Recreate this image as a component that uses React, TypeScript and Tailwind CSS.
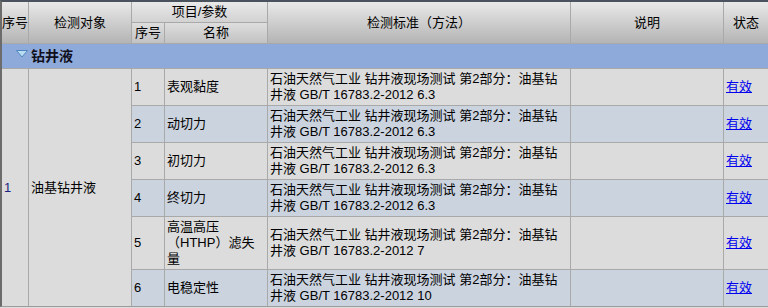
const rows = [
  { no: "1", name: "表观黏度", clause: "6.3" },
  { no: "2", name: "动切力", clause: "6.3" },
  { no: "3", name: "初切力", clause: "6.3" },
  { no: "4", name: "终切力", clause: "6.3" },
  { no: "5", name: "高温高压（HTHP）滤失量", clause: "7" },
  { no: "6", name: "电稳定性", clause: "10" },
];

const headTall = "bg-gradient-to-b from-[#e9e9e9] to-[#b4b4b4]";

function Caret() {
  return (
    <svg width="12" height="8" viewBox="0 0 12 8" className="mr-[3px] mt-[-4px]">
      <polygon points="0.5,0.5 11.5,0.5 6,7" fill="#b9dcf3" stroke="#4f86bd" strokeWidth="1" />
    </svg>
  );
}

export default function App() {
  return (
    <div className="w-[768px] h-[308px] overflow-hidden bg-[#dedede] font-['Liberation_Sans','Noto_Sans_CJK_SC',sans-serif] text-[13px] leading-[16px] text-black">
      <div className="grid grid-cols-[26px_102px_32px_102px_302px_152px_1fr] grid-rows-[20px_20px_24px] gap-px bg-[#a9a9a9] border-t-2 border-l-2 border-b border-t-[#4a525e] border-l-[#6c6c6c] border-b-[#9c9c9c]">
        {/* header */}
        <div className={`row-span-2 flex items-center justify-center ${headTall}`}>序号</div>
        <div className={`row-span-2 flex items-center justify-center ${headTall}`}>检测对象</div>
        <div className="col-span-2 flex items-center justify-center bg-gradient-to-b from-[#e9e9e9] to-[#d2d2d2]">项目/参数</div>
        <div className={`row-span-2 flex items-center justify-center ${headTall}`}>检测标准（方法）</div>
        <div className={`row-span-2 flex items-center justify-center ${headTall}`}>说明</div>
        <div className={`row-span-2 flex items-center justify-center ${headTall}`}>状态</div>
        <div className="flex items-center justify-center bg-gradient-to-b from-[#dedede] to-[#c2c2c2]">序号</div>
        <div className="flex items-center justify-center bg-gradient-to-b from-[#dedede] to-[#c2c2c2]">名称</div>

        {/* group */}
        <div className="col-span-7 flex items-center bg-[#8eaadb] pl-[14px]">
          <Caret />
          <span className="font-bold text-[14px] text-[#10101c]">钻井液</span>
        </div>

        {/* body */}
        <div className="row-span-6 flex items-center bg-[#dcdcdc] px-[2px] text-[#1a2380]">1</div>
        <div className="row-span-6 flex items-center bg-[#dcdcdc] px-[2px]">油基钻井液</div>
        {rows.map((r, i) => {
          const bg = i % 2 === 0 ? "bg-[#dcdcdc]" : "bg-[#cbd3df]";
          return [
            <div key={`n${i}`} className={`flex items-center px-[2px] py-[2px] ${bg}`}>{r.no}</div>,
            <div key={`m${i}`} className={`flex items-center px-[2px] py-[2px] ${bg}`}>{r.name}</div>,
            <div key={`s${i}`} className={`flex items-center px-[2px] py-[2px] ${bg}`}>
              石油天然气工业 钻井液现场测试 第2部分：油基钻井液 GB/T 16783.2-2012 {r.clause}
            </div>,
            <div key={`d${i}`} className={bg} />,
            <div key={`v${i}`} className={`flex items-center px-[2px] ${bg}`}>
              <a href="#" className="text-[#0000ee] underline">有效</a>
            </div>,
          ];
        })}
      </div>
    </div>
  );
}
